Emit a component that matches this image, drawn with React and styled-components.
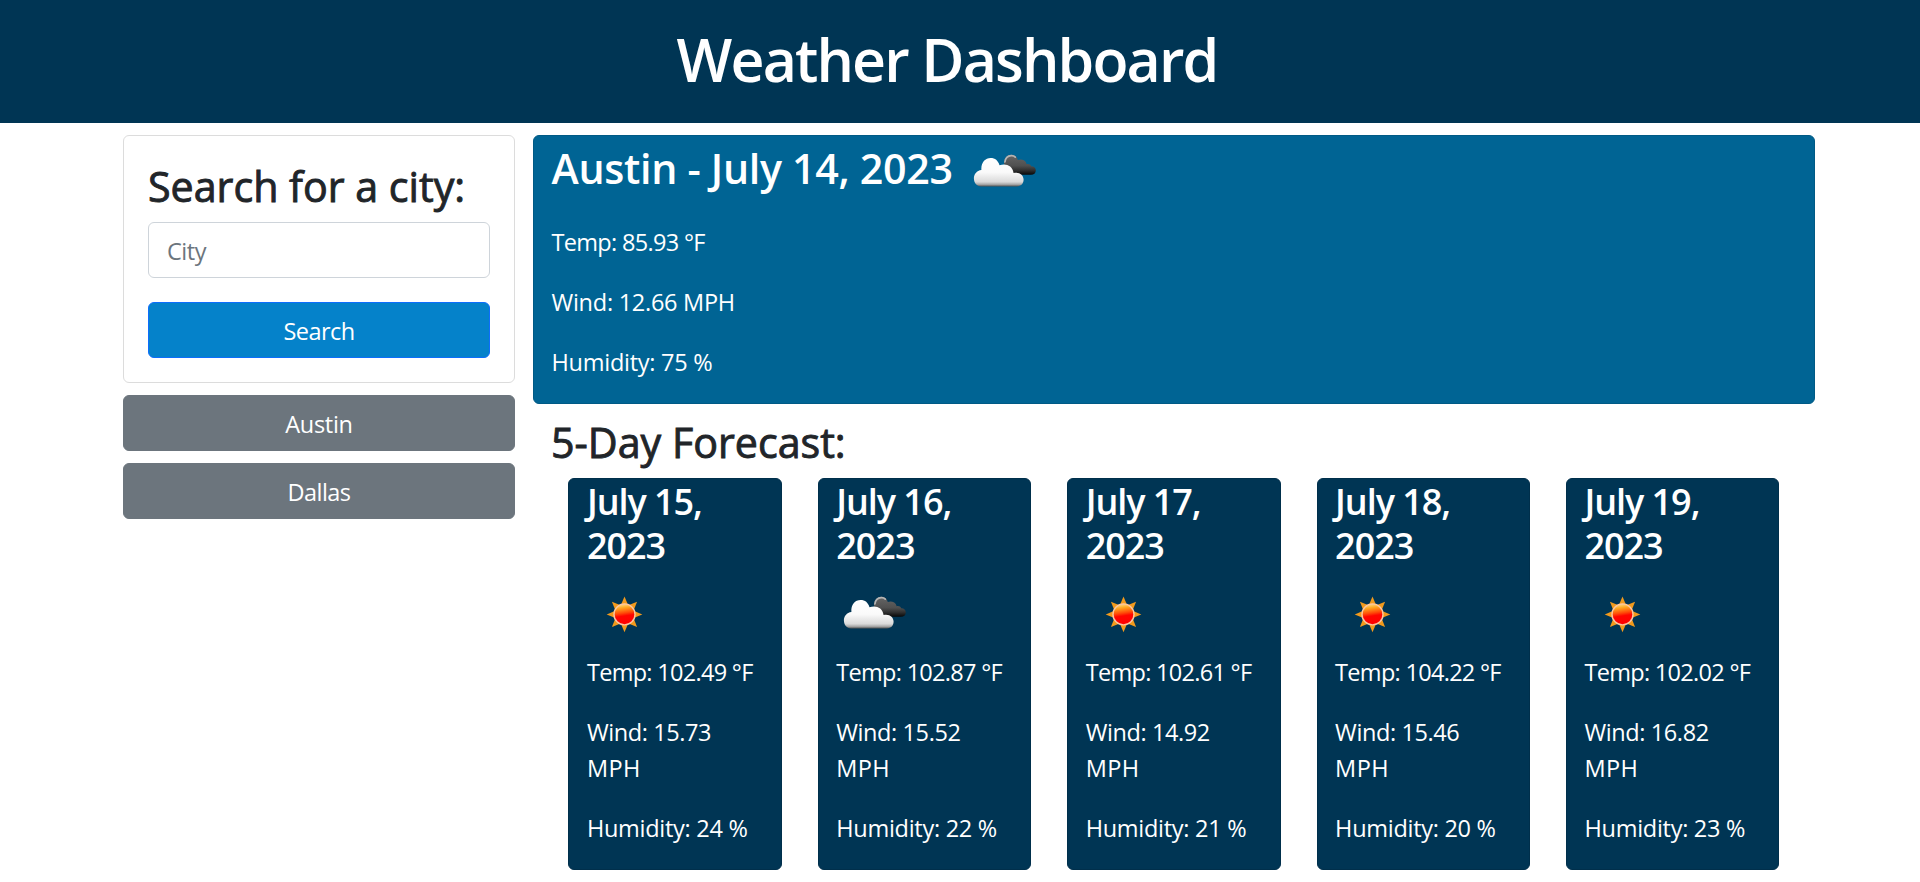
import React from "react";
import styled, { createGlobalStyle } from "styled-components";

const colors = {
  navy: "#003554",
  ocean: "#006494",
  sky: "#0582ca",
  gray: "#6c757d",
  text: "#212529",
};

const GlobalStyle = createGlobalStyle`
  *, *::before, *::after { box-sizing: border-box; }
  body {
    margin: 0;
    background: #fff;
    color: ${colors.text};
    font-family: "Open Sans", "Noto Sans", sans-serif;
    font-size: 23.5px;
    line-height: 36px;
    overflow: hidden;
  }
  h1, h2, h3, p { margin: 0; }
`;

const Header = styled.header`
  height: 123px;
  padding: 23px 26px 0 0;
  background: ${colors.navy};
  color: #fff;
  text-align: center;
`;

const PageTitle = styled.h1`
  font-size: 59px;
  line-height: 72px;
  font-weight: 600;
  letter-spacing: -1.86px;
`;

const Page = styled.main`
  display: flex;
  align-items: flex-start;
  gap: 18px;
  padding: 12px 105px 0 123px;
`;

const Sidebar = styled.aside`
  display: flex;
  flex-direction: column;
  gap: 12px;
  width: 392px;
`;

const SearchCard = styled.form`
  height: 248px;
  padding: 25px 24px 0;
  border: 1px solid #dcdcdc;
  border-radius: 6px;
`;

const Heading = styled.h2`
  font-size: 41.2px;
  line-height: 50px;
  font-weight: ${(p) => (p.$strong ? 600 : 500)};
  -webkit-text-stroke: ${(p) => (p.$strong ? 0 : 0.9)}px currentColor;
  letter-spacing: ${(p) => p.$tracking ?? 0}px;
  white-space: nowrap;
`;

const CityInput = styled.input`
  display: block;
  width: 100%;
  height: 56px;
  margin: 11px 0 24px;
  padding: 2px 18px 0;
  border: 1px solid #ced4da;
  border-radius: 6px;
  font: inherit;
  letter-spacing: -0.45px;
  color: ${colors.text};
  outline: none;
  &::placeholder { color: ${colors.gray}; opacity: 1; }
`;

const Button = styled.button`
  display: block;
  width: 100%;
  height: 56px;
  padding: 2px 0 0;
  border: 1px solid ${(p) => (p.$primary ? "#0d6efd" : colors.gray)};
  border-radius: 6px;
  background: ${(p) => (p.$primary ? colors.sky : colors.gray)};
  color: #fff;
  font: inherit;
  letter-spacing: ${(p) => p.$tracking}px;
`;

const Content = styled.section`
  flex: 1;
`;

const CurrentCard = styled.article`
  height: 269px;
  padding: 0 17.500px;
  border: 1px solid #005a85;
  border-radius: 6px;
  background: ${colors.ocean};
  color: #fff;
`;

const CurrentTitle = styled.div`
  display: flex;
  gap: 13px;
  height: 74px;
  margin-bottom: 14px;
  padding-top: 7px;
`;

const Icon = styled.svg`
  display: block;
  flex: none;
  width: 75px;
  height: 75px;
  margin-top: ${(p) => p.$top ?? 0}px;
`;

const Reading = styled.p`
  margin-bottom: 24px;
  letter-spacing: ${(p) => p.$tracking}px;
`;

const Unit = styled.span`
  letter-spacing: 0.4px;
`;

const ForecastHeading = styled.div`
  padding: 13px 0 11px 18px;
`;

const ForecastRow = styled.div`
  display: grid;
  grid-template-columns: repeat(5, 1fr);
  gap: 36px;
  padding: 0 35.600px 0 35.400px;
`;

const DayCard = styled.article`
  height: 392px;
  padding: 1px 18px 0 17.500px;
  border: 1px solid #002f4b;
  border-radius: 6px;
  background: ${colors.navy};
  color: #fff;
`;

const DayTitle = styled.h3`
  width: 130px;
  margin-bottom: 9px;
  font-size: 36px;
  line-height: 44px;
  font-weight: 600;
  letter-spacing: -1.05px;
`;

const DayReadings = styled.div`
  padding-top: 2px;
`;

function Clouds({ top }) {
  return (
    <Icon viewBox="0 0 75 75" $top={top} aria-label="broken clouds">
      <defs>
        <linearGradient id="darkCloud" x1="0" y1="0" x2="0" y2="1">
          <stop offset="0" stopColor="#666" />
          <stop offset="0.55" stopColor="#505050" />
          <stop offset="0.78" stopColor="#303030" />
          <stop offset="1" stopColor="#080808" />
        </linearGradient>
        <linearGradient id="whiteCloud" x1="0" y1="0" x2="0" y2="1">
          <stop offset="0" stopColor="#fff" />
          <stop offset="0.5" stopColor="#fafafa" />
          <stop offset="0.84" stopColor="#dadada" />
          <stop offset="0.93" stopColor="#a8a8a8" />
          <stop offset="1" stopColor="#555" />
        </linearGradient>
      </defs>
      <path
        fill="url(#darkCloud)"
        d="M38 29C37.500 23.500 41 19.700 45.500 19.700C48.800 19.700 51 21.700 51.800 25.100C54.700 23.800 59.600 24.800 60.700 29.300C62.800 28.700 64.500 29.600 65.200 31.300C68.200 31.300 69.800 33.200 69.800 35.400C69.800 38 67.800 39.700 65 39.700H45Z"
      />
      <path
        fill="none"
        stroke="#b5b5b5"
        strokeWidth="1.700"
        strokeLinecap="round"
        d="M38.900 27C39.400 23.200 42 20.800 45.200 20.600C46.900 20.500 48.300 21.100 49.300 22.100"
      />
      <path
        fill="url(#whiteCloud)"
        d="M15 51.400C10.800 51.400 7.900 47.900 7.900 43.500C7.900 39.200 10.800 35.400 15.400 34.900C14.800 27.700 19 23 24.700 23C29 23 32.200 25.500 33.500 30.300C39.500 28.100 46.500 30.200 47.600 38.100C53.400 36.700 57.600 40.300 57.600 44.500C57.600 48.400 54.900 51.400 51 51.400Z"
      />
    </Icon>
  );
}

function Sun() {
  return (
    <Icon viewBox="0 0 75 75" aria-label="clear sky">
      <defs>
        <linearGradient id="sunFace" x1="0.350" y1="0" x2="0.500" y2="1">
          <stop offset="0" stopColor="#ffe08a" />
          <stop offset="0.2" stopColor="#ffa51f" />
          <stop offset="0.44" stopColor="#ff4a08" />
          <stop offset="0.58" stopColor="#ff0500" />
          <stop offset="1" stopColor="#ff0000" />
        </linearGradient>
      </defs>
      {[0, 45, 90, 135, 180, 225, 270, 315].map((angle) => (
        <path
          key={angle}
          fill="#f29a1c"
          d="M37.500 19.600L33.300 29.500H41.700Z"
          transform={`rotate(${angle} 37.500 37.400)`}
        />
      ))}
      <circle cx="37.500" cy="37.400" r="10.500" fill="url(#sunFace)" stroke="#fcc6a0" strokeWidth="1.400" />
    </Icon>
  );
}

const days = [
  { date: "July 15, 2023", icon: "sun", temp: "102.49", wind: "15.73", humidity: 24 },
  { date: "July 16, 2023", icon: "clouds", temp: "102.87", wind: "15.52", humidity: 22 },
  { date: "July 17, 2023", icon: "sun", temp: "102.61", wind: "14.92", humidity: 21 },
  { date: "July 18, 2023", icon: "sun", temp: "104.22", wind: "15.46", humidity: 20 },
  { date: "July 19, 2023", icon: "sun", temp: "102.02", wind: "16.82", humidity: 23 },
];

export default function App() {
  return (
    <>
      <GlobalStyle />
      <Header>
        <PageTitle>Weather Dashboard</PageTitle>
      </Header>
      <Page>
        <Sidebar>
          <SearchCard>
            <Heading>Search for a city:</Heading>
            <CityInput placeholder="City" />
            <Button type="button" $primary $tracking={-0.56}>Search</Button>
          </SearchCard>
          <Button type="button" $tracking={-0.3}>Austin</Button>
          <Button type="button" $tracking={-0.56}>Dallas</Button>
        </Sidebar>
        <Content>
          <CurrentCard>
            <CurrentTitle>
              <Heading $strong $tracking={-0.3}>Austin - July 14, 2023</Heading>
              <Clouds top={-8} />
            </CurrentTitle>
            <Reading $tracking={-0.68}>Temp: 85.93 °F</Reading>
            <Reading $tracking={-0.26}>Wind: 12.66 MPH</Reading>
            <Reading $tracking={-0.26}>Humidity: 75 %</Reading>
          </CurrentCard>
          <ForecastHeading>
            <Heading>5-Day Forecast:</Heading>
          </ForecastHeading>
          <ForecastRow>
            {days.map((d) => (
              <DayCard key={d.date}>
                <DayTitle>{d.date}</DayTitle>
                {d.icon === "sun" ? <Sun /> : <Clouds />}
                <DayReadings>
                  <Reading $tracking={-0.7}>{`Temp: ${d.temp} °F`}</Reading>
                  <Reading $tracking={-0.4}>
                    {`Wind: ${d.wind} `}
                    <Unit>MPH</Unit>
                  </Reading>
                  <Reading $tracking={-0.28}>{`Humidity: ${d.humidity} %`}</Reading>
                </DayReadings>
              </DayCard>
            ))}
          </ForecastRow>
        </Content>
      </Page>
    </>
  );
}
